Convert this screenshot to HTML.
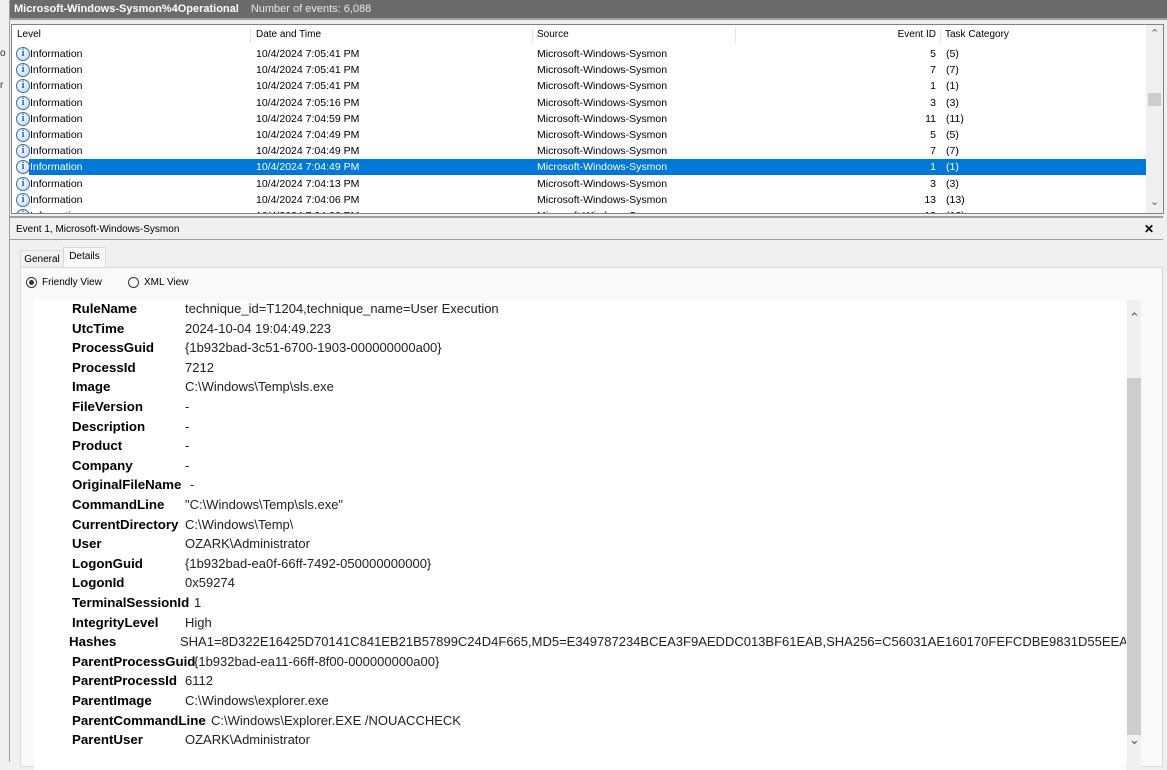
<!DOCTYPE html>
<html><head><meta charset="utf-8"><style>
*{margin:0;padding:0;box-sizing:border-box}
body{width:1167px;height:762px;overflow:hidden;background:#f0f0f0;font-family:"Liberation Sans",sans-serif;position:relative;color:#000}
.abs{position:absolute}
#title{left:10px;top:0;width:1157px;height:20px;background:#6b6b6b;border-bottom:2px solid #a0a0a0;color:#fff;font-size:11px;line-height:19px;padding-left:4px;white-space:nowrap}
#title b{margin-right:12px}
#title span{color:#e8e8e8}
#list{left:11px;top:24px;width:1153px;height:190px;background:#fff;border:1px solid #828282;overflow:hidden}
.hdr{position:absolute;top:0;height:19px;font-size:10px;line-height:19px;color:#000}
.row{position:absolute;left:0;width:1135px;height:16px;font-size:10.5px;line-height:16px}
.row span{position:absolute;white-space:nowrap}
.row.sel .hl{position:absolute;left:17px;right:0;top:0;bottom:0;background:#0078d7}
.row.sel span{color:#fff}
.ic{position:absolute;left:4px;top:1px;width:14px;height:14px;border-radius:50%;border:1px solid #3a6fb0;background:radial-gradient(circle at 40% 35%,#fff,#b9d3f0);color:#1f5fb0;font:bold 10px/12px "Liberation Serif",serif;text-align:center}
#vs{left:1134px;top:0;width:17px;height:188px;background:#f0f0f0}
#panel{left:10px;top:216px;width:1153px;height:546px;border-top:2px solid #a0a0a0;}
.lbl{font-weight:bold;font-size:13.3px!important}
.dr{position:absolute;font-size:13px;white-space:nowrap;height:20px;line-height:20px}
</style></head><body>
<div class="abs" style="left:0;top:0;width:10px;height:762px;background:#f0f0f0;border-right:1px solid #a0a0a0"></div>
<div class="abs" style="left:0;top:48px;font-size:10px;color:#333">o</div>
<div class="abs" style="left:0;top:80px;font-size:10px;color:#333">r</div>
<div id="title" class="abs"><b>Microsoft-Windows-Sysmon%4Operational</b><span>Number of events: 6,088</span></div>
<div id="list" class="abs">
<div class="hdr" style="left:5px">Level</div>
<div class="abs" style="left:238px;top:2px;width:1px;height:16px;background:#e5e5e5"></div>
<div class="hdr" style="left:244px">Date and Time</div>
<div class="abs" style="left:520px;top:2px;width:1px;height:16px;background:#e5e5e5"></div>
<div class="hdr" style="left:525px">Source</div>
<div class="abs" style="left:723px;top:2px;width:1px;height:16px;background:#e5e5e5"></div>
<div class="hdr" style="left:860px;width:64px;text-align:right">Event ID</div>
<div class="abs" style="left:928px;top:2px;width:1px;height:16px;background:#e5e5e5"></div>
<div class="hdr" style="left:933px">Task Category</div>
<div id="rows"></div>
<div id="vs" class="abs"><div class="abs" style="left:4px;top:2px;font-size:11px;color:#606060">&#8963;</div><div class="abs" style="left:2px;top:68px;width:13px;height:13px;background:#cdcdcd"></div><div class="abs" style="left:4px;top:170px;font-size:11px;color:#606060">&#8964;</div></div>
</div>
<div id="panel" class="abs">
<div class="abs" style="left:6px;top:6px;font-size:10px">Event 1, Microsoft-Windows-Sysmon</div>
<div class="abs" style="left:1134px;top:4px;font-size:12px;font-weight:bold">✕</div>
<div class="abs" style="left:0;top:21px;width:1153px;height:1px;background:#a0a0a0"></div>
<div class="abs" style="left:10px;top:32px;width:44px;height:17px;border:1px solid #d9d9d9;border-bottom:none;font-size:10px;line-height:17px;text-align:center">General</div>
<div class="abs" style="left:53px;top:29px;width:43px;height:21px;background:#f9f9f9;border:1px solid #d9d9d9;border-bottom:none;font-size:10px;line-height:18px;text-align:center">Details</div>
<div class="abs" style="left:10px;top:49px;width:1143px;height:500px;background:#f9f9f9;border:1px solid #d9d9d9"></div>
<div class="abs" style="left:16px;top:59px;width:11px;height:11px;border-radius:50%;border:1px solid #333;background:#fff"><div style="margin:2px;width:5px;height:5px;border-radius:50%;background:#333"></div></div>
<div class="abs" style="left:32px;top:59px;font-size:10px">Friendly View</div>
<div class="abs" style="left:118px;top:59px;width:11px;height:11px;border-radius:50%;border:1px solid #333;background:#fff"></div>
<div class="abs" style="left:134px;top:59px;font-size:10px">XML View</div>
<div class="abs" style="left:24px;top:82px;width:1092px;height:470px;background:#fff"></div>
<div class="abs" style="left:1117px;top:82px;width:14px;height:470px;background:#f0f0f0"><div class="abs" style="left:0;top:78px;width:14px;height:357px;background:#cdcdcd"></div><div class="abs" style="left:2px;top:10px;font-size:13px;color:#555">&#8963;</div><div class="abs" style="left:2px;top:432px;font-size:13px;color:#555">&#8964;</div></div>
</div>
<div id="det"></div>
<script>
var r=[["5","7:05:41"],["7","7:05:41"],["1","7:05:41"],["3","7:05:16"],["11","7:04:59"],["5","7:04:49"],["7","7:04:49"],["1","7:04:49"],["3","7:04:13"],["13","7:04:06"],["13","7:04:06"]];
var h="";r.forEach(function(x,i){h+='<div class="row'+(i==7?' sel':'')+'" style="top:'+(21+i*16.2)+'px">'+(i==7?'<div class="hl"></div>':'')+'<div class="ic">i</div><span style="left:18px">Information</span><span style="left:244px">10/4/2024 '+x[1]+' PM</span><span style="left:525px">Microsoft-Windows-Sysmon</span><span style="left:860px;width:64px;text-align:right">'+x[0]+'</span><span style="left:934px">('+x[0]+')</span></div>'});
document.getElementById("rows").innerHTML=h;
var d=[["RuleName","technique_id=T1204,technique_name=User Execution",185],["UtcTime","2024-10-04 19:04:49.223",185],["ProcessGuid","{1b932bad-3c51-6700-1903-000000000a00}",185],["ProcessId","7212",185],["Image","C:\\Windows\\Temp\\sls.exe",185],["FileVersion","-",185],["Description","-",185],["Product","-",185],["Company","-",185],["OriginalFileName","-",190],["CommandLine","\"C:\\Windows\\Temp\\sls.exe\"",185],["CurrentDirectory","C:\\Windows\\Temp\\",185],["User","OZARK\\Administrator",185],["LogonGuid","{1b932bad-ea0f-66ff-7492-050000000000}",185],["LogonId","0x59274",185],["TerminalSessionId","1",194],["IntegrityLevel","High",185],["Hashes","SHA1=8D322E16425D70141C841EB21B57899C24D4F665,MD5=E349787234BCEA3F9AEDDC013BF61EAB,SHA256=C56031AE160170FEFCDBE9831D55EEA4",180],["ParentProcessGuid","{1b932bad-ea11-66ff-8f00-000000000a00}",194],["ParentProcessId","6112",185],["ParentImage","C:\\Windows\\explorer.exe",185],["ParentCommandLine","C:\\Windows\\Explorer.EXE /NOUACCHECK",211],["ParentUser","OZARK\\Administrator",185]];
h="";d.forEach(function(x,i){var y=299+i*19.6;h+='<div class="dr lbl" style="left:'+(x[0]=="Hashes"?69:72)+'px;top:'+y+'px">'+x[0]+'</div><div class="dr" style="left:'+x[2]+'px;top:'+y+'px;max-width:'+(1126-x[2])+'px;overflow:hidden;color:#222">'+x[1].replace(/</g,"&lt;")+'</div>'});
document.getElementById("det").innerHTML=h;
</script>
</body></html>
